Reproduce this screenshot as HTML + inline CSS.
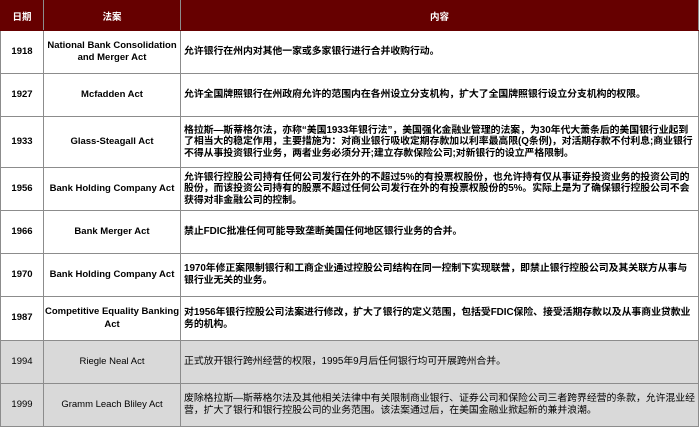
<!DOCTYPE html><html><head><meta charset="utf-8"><style>
*{margin:0;padding:0;box-sizing:border-box}
body{width:700px;height:427px;background:#fff;overflow:hidden;font-family:"Liberation Sans","Noto Sans CJK SC",sans-serif}
table{position:absolute;left:0;top:0;width:699px;border-collapse:collapse;table-layout:fixed}
td{border:1px solid #8c8c8c;font-size:9.9px;line-height:11.6px;font-weight:bold;color:#000;vertical-align:middle;overflow:hidden}
th{background:#660000;color:#fff;font-size:9.5px;font-weight:bold;height:30px;border:1px solid #660000;border-right:1px solid #8c8c8c;text-align:center}
td.y,td.a{text-align:center;font-size:9.5px;line-height:12.5px;padding:0}
td.c{padding:0 2px 0 3px;letter-spacing:-0.05px}
tr.g td{background:#d9d9d9;font-weight:normal}
</style></head><body>
<table>
<colgroup><col style="width:43px"><col style="width:137px"><col></colgroup>
<tr><th>日期</th><th>法案</th><th>内容</th></tr>
<tr style="height:43px"><td class="y">1918</td><td class="a">National Bank Consolidation<br>and Merger Act</td><td class="c">允许银行在州内对其他一家或多家银行进行合并收购行动。</td></tr>
<tr style="height:43px"><td class="y">1927</td><td class="a">Mcfadden Act</td><td class="c">允许全国牌照银行在州政府允许的范围内在各州设立分支机构，扩大了全国牌照银行设立分支机构的权限。</td></tr>
<tr style="height:51px"><td class="y">1933</td><td class="a">Glass-Steagall Act</td><td class="c">格拉斯—斯蒂格尔法，亦称“美国1933年银行法”，美国强化金融业管理的法案，为30年代大萧条后的美国银行业起到了相当大的稳定作用，主要措施为：对商业银行吸收定期存款加以利率最高限(Q条例)，对活期存款不付利息;商业银行不得从事投资银行业务，两者业务必须分开;建立存款保险公司;对新银行的设立严格限制。</td></tr>
<tr style="height:43px"><td class="y">1956</td><td class="a">Bank Holding Company Act</td><td class="c">允许银行控股公司持有任何公司发行在外的不超过5%的有投票权股份，也允许持有仅从事证券投资业务的投资公司的股份，而该投资公司持有的股票不超过任何公司发行在外的有投票权股份的5%。实际上是为了确保银行控股公司不会获得对非金融公司的控制。</td></tr>
<tr style="height:43px"><td class="y">1966</td><td class="a">Bank Merger Act</td><td class="c">禁止FDIC批准任何可能导致垄断美国任何地区银行业务的合并。</td></tr>
<tr style="height:43px"><td class="y">1970</td><td class="a">Bank Holding Company Act</td><td class="c">1970年修正案限制银行和工商企业通过控股公司结构在同一控制下实现联营，即禁止银行控股公司及其关联方从事与银行业无关的业务。</td></tr>
<tr style="height:44px"><td class="y">1987</td><td class="a">Competitive Equality Banking<br>Act</td><td class="c">对1956年银行控股公司法案进行修改，扩大了银行的定义范围，包括受FDIC保险、接受活期存款以及从事商业贷款业务的机构。</td></tr>
<tr class="g" style="height:43px"><td class="y">1994</td><td class="a">Riegle Neal Act</td><td class="c">正式放开银行跨州经营的权限，1995年9月后任何银行均可开展跨州合并。</td></tr>
<tr class="g" style="height:43px"><td class="y">1999</td><td class="a">Gramm Leach Bliley Act</td><td class="c">废除格拉斯—斯蒂格尔法及其他相关法律中有关限制商业银行、证券公司和保险公司三者跨界经营的条款，允许混业经营，扩大了银行和银行控股公司的业务范围。该法案通过后，在美国金融业掀起新的兼并浪潮。</td></tr>
</table>
</body></html>
